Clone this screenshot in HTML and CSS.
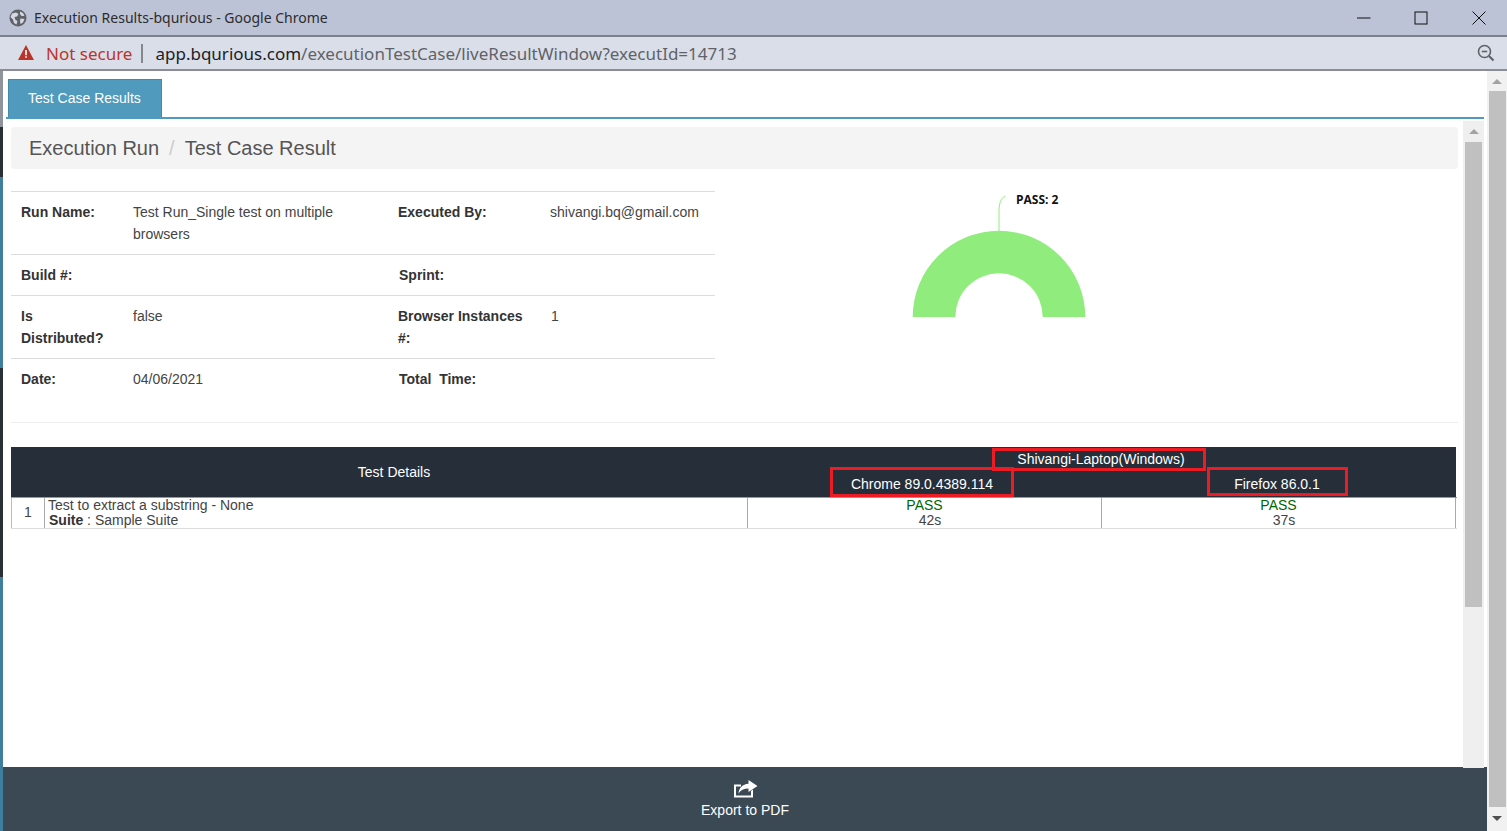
FILE: index.html
```html
<!DOCTYPE html>
<html lang="en">
<head>
<meta charset="utf-8">
<title>Execution Results-bqurious - Google Chrome</title>
<link rel="stylesheet" href="styles.css">
</head>
<body>
<header class="titlebar">
  <svg class="globe" width="18" height="18" viewBox="0 0 18 18"><circle cx="9" cy="9" r="8.5" fill="#5f6368"/><path d="M3 4.5 7 3.5 9.5 5 8 7.5 5.5 8 6.5 11 8.5 12 7.5 15.5 5 14 4 10.5 1.5 8ZM11 2.5 14 4 15.5 7 12.5 7 11 5ZM11.5 9.5 15.5 10 14 13.5 11.5 15 11 12Z" fill="#d5d8e2"/></svg>
  <span class="title">Execution Results-bqurious - Google Chrome</span>
  <svg class="winbtn min" width="14" height="14" viewBox="0 0 14 14"><path d="M0 7H13.5" stroke="#111" fill="none"/></svg>
  <svg class="winbtn max" width="14" height="14" viewBox="0 0 14 14"><rect x="1" y="1" width="12" height="12" stroke="#111" fill="none"/></svg>
  <svg class="winbtn close" width="14" height="14" viewBox="0 0 14 14"><path d="M.5.5 13.5 13.5M13.5.5.5 13.5" stroke="#111" fill="none"/></svg>
</header>
<div class="addressbar">
  <svg class="warn" width="16" height="15" viewBox="0 0 16 15"><path d="M8 0 16 15H0Z" fill="#b9352c"/><path d="M7.2 5H8.8V10.2H7.2ZM7.2 11.2H8.8V12.8H7.2Z" fill="#fff"/></svg>
  <span class="notsecure">Not secure</span>
  <span class="sep"></span>
  <span class="url"><span class="host">app.bqurious.com</span>/executionTestCase/liveResultWindow?executId=14713</span>
  <svg class="zoomout" width="18" height="18" viewBox="0 0 18 18"><circle cx="7.5" cy="7.5" r="6" stroke="#5f6368" stroke-width="1.6" fill="none"/><path d="M4.8 7.5H10.2" stroke="#5f6368" stroke-width="1.6"/><path d="M12 12 16.5 16.5" stroke="#5f6368" stroke-width="2.2"/></svg>
</div>
<div class="main">
  <div class="strip">
    <i class="seg seg-gray"></i><i class="seg seg-dark1"></i><i class="seg seg-teal1"></i><i class="seg seg-dark2"></i><i class="seg seg-teal2"></i>
  </div>
  <div class="window">
    <div class="tabs"><a class="tab">Test Case Results</a></div>
    <div class="pane">
      <div class="content">
        <nav class="breadcrumb"><span>Execution Run</span><span class="slash">/</span><span>Test Case Result</span></nav>
        <div class="summary">
          <table class="info">
            <colgroup><col class="c1"><col class="c2"><col class="c3"><col class="c4"></colgroup>
            <tr><th>Run Name:</th><td>Test Run_Single test on multiple browsers</td><th>Executed By:</th><td class="email">shivangi.bq@gmail.com</td></tr>
            <tr><th>Build #:</th><td></td><th class="nudge">Sprint:</th><td></td></tr>
            <tr><th>Is Distributed?</th><td>false</td><th>Browser Instances #:</th><td>1</td></tr>
            <tr><th>Date:</th><td>04/06/2021</td><th class="nudge">Total&nbsp; Time:</th><td></td></tr>
          </table>
          <svg class="chart" width="743" height="231" viewBox="0 0 743 231">
            <path d="M284 40V21C284 12 286 7 290 5" stroke="#90ed7d" fill="none"/>
            <text x="301" y="13" class="chart-label">PASS: 2</text>
            <path d="M197.7 126A86.3 86.3 0 0 1 370.3 126H327.7A43.7 43.7 0 0 0 240.3 126Z" fill="#90ed7d"/>
          </svg>
        </div>
        <div class="results">
          <div class="head">
            <div class="h-details">Test Details</div>
            <div class="h-host">Shivangi-Laptop(Windows)</div>
            <div class="h-browser">Chrome 89.0.4389.114</div>
            <div class="h-browser">Firefox 86.0.1</div>
            <span class="mark mark-host"></span>
            <span class="mark mark-chrome"></span>
            <span class="mark mark-firefox"></span>
          </div>
          <div class="row">
            <div class="cell num">1</div>
            <div class="cell name">Test to extract a substring - None<br><span class="suite"><b>Suite</b> : Sample Suite</span></div>
            <div class="cell res"><span class="pass">PASS</span><span class="time">42s</span></div>
            <div class="cell res"><span class="pass">PASS</span><span class="time">37s</span></div>
          </div>
        </div>
      </div>
      <div class="scroll inner">
        <span class="arrow up"></span>
        <span class="thumb thumb-inner"></span>
      </div>
    </div>
    <footer class="footer">
      <svg class="share" width="25" height="18" viewBox="0 0 25 18"><path d="M1 4.5H8V6.5H3V15.5H18V11L20 9.5V17.5H1Z" fill="#fff"/><path d="M15.5 0 24.5 6 15.5 12V8.5C11 8.5 7.5 10 5.5 13.5 6 8 9.5 4 15.5 3.7Z" fill="#fff"/></svg>
      <span>Export to PDF</span>
    </footer>
  </div>
  <div class="scroll outer">
    <span class="arrow up"></span>
    <span class="thumb thumb-outer"></span>
    <span class="arrow down"></span>
  </div>
</div>
</body>
</html>
```
FILE: styles.css
```css
* { box-sizing: border-box; }
html, body { margin: 0; height: 100%; }
body {
  width: 1507px; height: 831px; overflow: hidden;
  display: flex; flex-direction: column;
  font-family: "Liberation Sans", Arial, sans-serif; font-size: 14px; color: #333;
  background: #fff;
}
.titlebar {
  flex: none; height: 37px; display: flex; align-items: center;
  background: #bdc3d6; border-bottom: 2px solid #7d8088; padding-left: 9px;
}
.title { margin-left: 7px; font-family: "Noto Sans", sans-serif; font-size: 14px; color: #2c2c2c; flex: 1; }
.winbtn { display: block; }
.min { margin-right: 43px; }
.max { margin-right: 44px; }
.close { margin-right: 21px; }
.addressbar {
  flex: none; height: 34px; display: flex; align-items: center;
  background: #dadee9; border-bottom: 2px solid #8a8d95; padding-left: 18px;
}
.warn { display: block; margin-top: -1px; }
.notsecure { margin-left: 12px; font-family: "Noto Sans", sans-serif; font-size: 17px; color: #b9352c; }
.sep { width: 2px; height: 19px; background: #84878f; margin: 0 12px 0 9px; }
.url { flex: 1; font-family: "Noto Sans", sans-serif; font-size: 17px; color: #5f6368; }
.host { color: #202124; }
.zoomout { display: block; margin-right: 12px; }
.main { flex: 1; min-height: 0; display: flex; }
.strip { width: 3px; display: flex; flex-direction: column; background: #dadee9; }
.seg { display: block; flex: none; }
.seg-gray { height: 56px; background: #8f939b; }
.seg-dark1 { height: 50px; background: #2a3038; }
.seg-teal1 { height: 191px; background: #3f7f9d; }
.seg-dark2 { height: 209px; background: #2a3038; }
.seg-teal2 { flex: 1; background: #3f7f9d; }
.window { flex: 1; min-width: 0; display: flex; flex-direction: column; background: #fff; border-radius: 4px 4px 0 0; }
.tabs { flex: none; height: 48px; margin: 0 3px; padding: 8px 0 0 2px; border-bottom: 2px solid #4f9abd; }
.tab {
  display: block; width: 154px; height: 38px; line-height: 37px; padding-left: 19px;
  background: #4f9abd; color: #fff; font-size: 14px; border: 1px solid #4589a9; border-bottom: 0;
}
.pane { flex: 1; min-height: 0; display: flex; padding-top: 2px; }
.content { flex: 1; min-width: 0; padding: 6px 5px 0 8px; }
.breadcrumb {
  height: 42px; display: flex; align-items: center; gap: 10px;
  padding-left: 18px; background: #f4f4f4; border-radius: 4px;
  font-size: 20px; color: #555;
}
.slash { color: #ccc; }
.summary { display: flex; margin-top: 22px; border-bottom: 1px solid #eee; height: 232px; }
.info { flex: none; width: 704px; height: 0; table-layout: fixed; border-collapse: separate; border-spacing: 0; line-height: 22px; }
.c1 { width: 112px; } .c2 { width: 265px; } .c3 { width: 153px; } .c4 { width: 174px; }
.info th, .info td { padding: 9px 10px; border-top: 1px solid #ddd; text-align: left; vertical-align: top; }
.info th { font-weight: bold; color: #333; }
.info td { font-weight: normal; color: #444; }
.info .nudge { padding-left: 11px; }
.info .email { padding-left: 9px; white-space: nowrap; }
.chart { display: block; flex: none; }
.chart-label { font-family: "Open Sans", sans-serif; font-size: 12px; font-weight: bold; fill: #111; }
.results { margin: 24px 1px 0 0; }
.head {
  position: relative; width: 1445px; height: 50px;
  display: grid; grid-template-columns: 735px 354px 356px; grid-template-rows: 25px 25px;
  background: #262e3a; color: #fff; font-size: 14px;
}
.h-details { grid-row: 1 / 3; display: flex; align-items: center; justify-content: center; padding-left: 31px; }
.h-host { grid-column: 2 / 4; text-align: center; line-height: 24px; }
.h-browser { text-align: center; line-height: 24px; padding-right: 2px; }
.mark { position: absolute; border: 3px solid #ed1c24; }
.mark-host { left: 981px; top: 1px; width: 214px; height: 23px; }
.mark-chrome { left: 819px; top: 20px; width: 184px; height: 30px; }
.mark-firefox { left: 1196px; top: 20px; width: 141px; height: 29px; }
.row {
  display: grid; grid-template-columns: 34px 703px 354px 354px 1px; height: 32px;
  border-top: 1px solid #999; border-bottom: 1px solid #ddd; line-height: 15px; font-size: 14px; color: #444;
}
.cell { border-right: 1px solid #aaa; }
.num { border-left: 1px solid #bbb; text-align: center; line-height: 28px; padding-right: 0; }
.name { padding-left: 3px; }
.suite { padding-left: 1px; }
.suite b { color: #333; }
.res { text-align: center; display: flex; flex-direction: column; align-items: center; }
.pass { color: #060; }
.time { padding-left: 11px; }
.scroll { position: relative; flex: none; background: #f1f1f1; display: flex; flex-direction: column; align-items: center; }
.scroll.inner { width: 21px; margin-right: 3px; background: #efefef; }
.scroll.outer { width: 20px; }
.arrow { flex: none; width: 0; height: 0; border-left: 5px solid transparent; border-right: 5px solid transparent; }
.arrow.up { margin-top: 8px; border-bottom: 5px solid #a3a3a3; }
.arrow.down { margin-top: 9px; border-top: 5px solid #505050; }
.thumb { flex: none; width: 17px; background: #c0c0c0; }
.thumb-inner { height: 465px; margin-top: 8px; }
.thumb-outer { height: 716px; margin-top: 7px; }
.footer {
  flex: none; height: 64px; display: flex; flex-direction: column; align-items: center;
  padding-top: 13px; background: #3a4954; color: #fff; font-size: 14px; margin-top: -1px;
}
.share { display: block; margin-bottom: 4px; }
```
